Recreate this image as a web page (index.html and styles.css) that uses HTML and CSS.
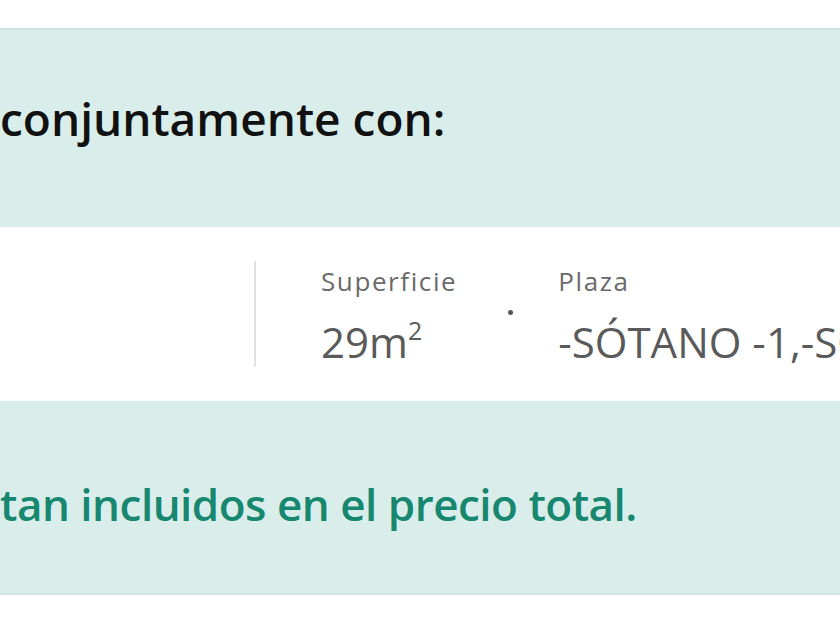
FILE: index.html
```html
<!DOCTYPE html>
<html lang="es">
<head>
<meta charset="utf-8">
<link rel="stylesheet" href="styles.css">
</head>
<body>
<div class="page">
  <section class="note note-top">
    <p class="note-title">conjuntamente con:</p>
  </section>
  <section class="annex">
    <div class="annex-lead"></div>
    <div class="annex-field field-area">
      <span class="field-label">Superficie</span>
      <span class="field-value">29m<sup>2</sup></span>
    </div>
    <span class="field-sep"></span>
    <div class="annex-field field-plaza">
      <span class="field-label">Plaza</span>
      <span class="field-value">-SÓTANO -1,-SÓTANO -1</span>
    </div>
  </section>
  <section class="note note-bottom">
    <p class="note-text">tan incluidos en el precio total.</p>
  </section>
</div>
</body>
</html>
```
FILE: styles.css
```css
html, body {
  margin: 0;
  padding: 0;
  background: #ffffff;
  overflow: hidden;
}
.page {
  width: 840px;
  height: 630px;
  padding-top: 28px;
  box-sizing: border-box;
  display: flex;
  flex-direction: column;
  font-family: "Open Sans", "Liberation Sans", sans-serif;
}
.note {
  background: #d9eeeb;
  display: flex;
  align-items: center;
  overflow: hidden;
  white-space: nowrap;
  flex-shrink: 0;
}
.note-top {
  height: 199px;
  border-top: 2px solid #d2e4e2;
  box-sizing: border-box;
}
.note-bottom {
  height: 194px;
  border-bottom: 2px solid #d2e4e2;
  box-sizing: border-box;
}
.note-title, .note-text {
  margin: 0;
  font-weight: 600;
}
.note-title {
  font-size: 46px;
  color: #111111;
  padding-bottom: 22px;
}
.note-text {
  font-size: 44px;
  letter-spacing: -0.5px;
  color: #17876f;
  padding-top: 14px;
}
.annex {
  height: 174px;
  flex-shrink: 0;
  display: flex;
  align-items: center;
  white-space: nowrap;
  overflow: hidden;
}
.annex-lead {
  width: 254px;
  height: 106px;
  border-right: 2px solid #e2e2e2;
  flex-shrink: 0;
}
.annex-field {
  display: flex;
  flex-direction: column;
  gap: 21px;
  padding-top: 4px;
}
.field-area {
  margin-left: 65px;
}
.field-plaza {
  flex-shrink: 0;
}
.field-label {
  font-size: 26px;
  line-height: 30px;
  letter-spacing: 1.6px;
  color: #6a6a6a;
}
.field-value {
  font-size: 42px;
  line-height: 50px;
  color: #5a5a5a;
}
.field-value sup {
  font-size: 25px;
  line-height: 0;
  vertical-align: 18px;
}
.field-sep {
  width: 5px;
  height: 5px;
  border-radius: 50%;
  background: #555555;
  margin: 0 45px 0 51px;
  flex-shrink: 0;
  align-self: center;
  position: relative;
  top: -2px;
}
```
